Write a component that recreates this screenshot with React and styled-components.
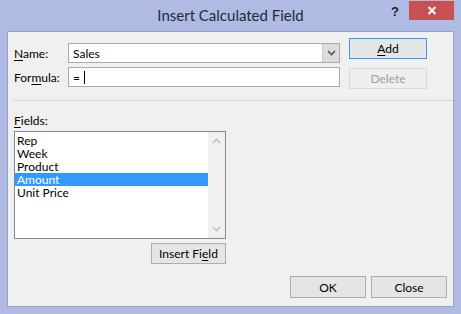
import React from "react";
import styled, { createGlobalStyle } from "styled-components";

const Global = createGlobalStyle`
  html, body { margin: 0; padding: 0; }
  body { background: #afbbe3; font-family: Lato, "Open Sans", sans-serif; }
`;

const Frame = styled.div`
  width: 461px;
  height: 314px;
  background: #afbbe3;
  display: flex;
  flex-direction: column;
  box-sizing: border-box;
`;

const TitleBar = styled.div`
  height: 31px;
  display: flex;
  align-items: flex-start;
`;

const Spacer = styled.div`
  width: 80px;
`;

const Title = styled.div`
  flex: 1;
  text-align: center;
  font-family: Lato, sans-serif;
  font-size: 15px;
  color: #1e2a3a;
  padding-top: 6px;
`;

const Help = styled.div`
  width: 28px;
  text-align: center;
  font-family: "Liberation Sans", sans-serif;
  font-weight: bold;
  font-size: 13px;
  color: #222;
  padding-top: 4px;
`;

const CloseX = styled.div`
  width: 45px;
  height: 19px;
  margin-top: 1px;
  margin-right: 7px;
  background: #c75050;
  display: flex;
  align-items: center;
  justify-content: center;
`;

const Client = styled.div`
  flex: 1;
  margin: 0 7px 7px 7px;
  background: #f0f0f0;
  border: 1px solid #97a3cf;
  display: flex;
  flex-direction: column;
  font-size: 12px;
  color: #000;
`;

const Top = styled.div`
  display: flex;
  padding: 6px 0 0 6px;
`;

const Fields = styled.div`
  display: flex;
  flex-direction: column;
  gap: 4px;
  margin-top: 5px;
`;

const Row = styled.div`
  display: flex;
  align-items: center;
`;

const Label = styled.div`
  width: 54px;
  u { text-decoration: underline; text-underline-offset: 2px; }
`;

const Input = styled.div`
  width: 272px;
  height: 20px;
  box-sizing: border-box;
  border: 1px solid #ababab;
  background: #fff;
  display: flex;
  align-items: center;
  padding-left: 4px;
`;

const Caret = styled.span`
  display: inline-block;
  width: 1px;
  height: 13px;
  background: #000;
  margin-left: 4px;
`;

const DropBtn = styled.div`
  margin-left: auto;
  width: 16px;
  height: 18px;
  background: #dcdcdc;
  border-left: 1px solid #c8c8c8;
  display: flex;
  align-items: center;
  justify-content: center;
`;

const Buttons = styled.div`
  display: flex;
  flex-direction: column;
  gap: 9px;
  margin-left: 9px;
`;

const Button = styled.div`
  width: ${(p) => p.w || 78}px;
  height: ${(p) => p.h || 21}px;
  box-sizing: border-box;
  border: 1px solid ${(p) => (p.primary ? "#3399ff" : p.disabled ? "#d9d9d9" : "#adadad")};
  background: ${(p) => (p.disabled ? "#efefef" : "#e5e5e5")};
  color: ${(p) => (p.disabled ? "#a0a0a0" : "#000")};
  display: flex;
  align-items: center;
  justify-content: center;
  u { text-decoration: underline; text-underline-offset: 2px; }
`;

const Separator = styled.div`
  height: 1px;
  background: #d5d5d5;
  margin: 11px 0 0 5px;
`;

const FieldsLabel = styled.div`
  margin: 12px 0 0 6px;
  u { text-decoration: underline; text-underline-offset: 2px; }
`;

const ListArea = styled.div`
  display: flex;
  flex-direction: column;
  align-items: flex-end;
  width: 212px;
  margin: 3px 0 0 6px;
  gap: 4px;
`;

const List = styled.div`
  width: 212px;
  height: 108px;
  box-sizing: border-box;
  border: 1px solid #828790;
  background: #fff;
  display: flex;
`;

const Items = styled.div`
  flex: 1;
  padding-top: 2px;
`;

const Item = styled.div`
  height: 13px;
  line-height: 13px;
  padding-left: 2px;
  background: ${(p) => (p.selected ? "#3399ff" : "transparent")};
  color: ${(p) => (p.selected ? "#fff" : "#000")};
`;

const Scroll = styled.div`
  width: 17px;
  background: #f0f0f0;
  display: flex;
  flex-direction: column;
  justify-content: space-between;
  align-items: center;
  padding: 6px 0;
`;

const Bottom = styled.div`
  display: flex;
  justify-content: flex-end;
  gap: 5px;
  margin: 12px 6px 0 0;
`;

const Chevron = ({ up, color }) => (
  <svg width="9" height="6" viewBox="0 0 9 6">
    <path
      d={up ? "M1 5 L4.5 1.5 L8 5" : "M1 1 L4.5 4.5 L8 1"}
      fill="none"
      stroke={color}
      strokeWidth="1.6"
    />
  </svg>
);

const items = ["Rep", "Week", "Product", "Amount", "Unit Price"];

export default function App() {
  return (
    <Frame>
      <Global />
      <TitleBar>
        <Spacer />
        <Title>Insert Calculated Field</Title>
        <Help>?</Help>
        <CloseX>
          <svg width="10" height="9" viewBox="0 0 10 9">
            <path d="M1.5 1 L8.5 8 M8.5 1 L1.5 8" stroke="#fff" strokeWidth="2" />
          </svg>
        </CloseX>
      </TitleBar>
      <Client>
        <Top>
          <Fields>
            <Row>
              <Label>
                <u>N</u>ame:
              </Label>
              <Input>
                Sales
                <DropBtn>
                  <Chevron color="#555" />
                </DropBtn>
              </Input>
            </Row>
            <Row>
              <Label>
                For<u>m</u>ula:
              </Label>
              <Input>
                =<Caret />
              </Input>
            </Row>
          </Fields>
          <Buttons>
            <Button primary>
              <u>A</u>dd
            </Button>
            <Button disabled>Delete</Button>
          </Buttons>
        </Top>
        <Separator />
        <FieldsLabel>
          <u>F</u>ields:
        </FieldsLabel>
        <ListArea>
          <List>
            <Items>
              {items.map((it) => (
                <Item key={it} selected={it === "Amount"}>
                  {it}
                </Item>
              ))}
            </Items>
            <Scroll>
              <Chevron up color="#c2c2c2" />
              <Chevron color="#c2c2c2" />
            </Scroll>
          </List>
          <Button w={75} h={21}>
            Insert Fi<u>e</u>ld
          </Button>
        </ListArea>
        <Bottom>
          <Button w={76} h={22}>OK</Button>
          <Button w={76} h={22}>Close</Button>
        </Bottom>
      </Client>
    </Frame>
  );
}
